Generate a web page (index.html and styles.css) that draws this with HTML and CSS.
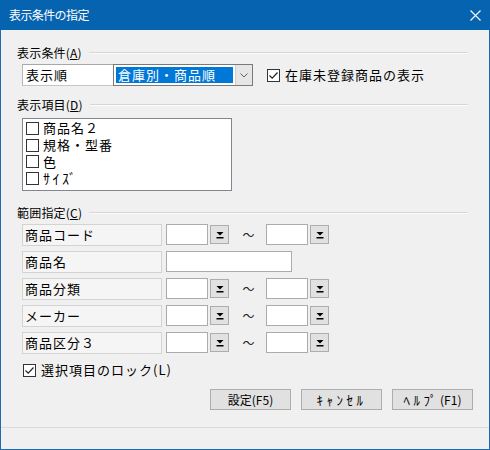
FILE: index.html
```html
<!DOCTYPE html>
<html lang="ja">
<head>
<meta charset="utf-8">
<title>表示条件の指定</title>
<link rel="stylesheet" href="styles.css">
</head>
<body>
<div class="win">
  <div class="titlebar">
    <span class="title">表示条件の指定</span>
    <svg class="close" width="11" height="11" viewBox="0 0 11 11"><path d="M0.5 0.5 L10.5 10.5 M10.5 0.5 L0.5 10.5" stroke="#fff" stroke-width="1.1" fill="none"/></svg>
  </div>
  <div class="body">
    <div class="grp g1"><span>表示条件(<u>A</u>)</span><i class="rule"></i></div>
    <div class="row1">
      <div class="sortlabel">表示順</div>
      <div class="combo">
        <div class="sel">倉庫別・商品順</div>
        <div class="drop"><svg width="8" height="5" viewBox="0 0 8 5"><path d="M0.5 0.5 L4 4 L7.5 0.5" stroke="#606060" fill="none" stroke-width="1"/></svg></div>
      </div>
      <label class="chk top"><span class="box checked"><svg width="11" height="11" viewBox="0 0 11 11"><path d="M1.5 5.5 L4.2 8.2 L9.5 2.5" stroke="#222" stroke-width="1.2" fill="none"/></svg></span><span class="lbl">在庫未登録商品の表示</span></label>
    </div>

    <div class="grp g2"><span>表示項目(<u>D</u>)</span><i class="rule"></i></div>
    <div class="list">
      <div class="item"><span class="box"></span><span class="lbl">商品名２</span></div>
      <div class="item"><span class="box"></span><span class="lbl">規格・型番</span></div>
      <div class="item"><span class="box"></span><span class="lbl">色</span></div>
      <div class="item"><span class="box"></span><span class="lbl hwk">ｻｲｽﾞ</span></div>
    </div>

    <div class="grp g3"><span>範囲指定(<u>C</u>)</span><i class="rule"></i></div>
    <div class="ranges">
      <div class="rrow">
        <div class="rlabel">商品コード</div>
        <div class="inp"></div><div class="dd"><svg width="8" height="8" viewBox="0 0 8 8"><path d="M0.5 1 H7.5 L4 4.5 Z" fill="#000"/><rect x="0.5" y="6" width="7" height="1.5" fill="#000"/></svg></div>
        <div class="tilde">～</div>
        <div class="inp"></div><div class="dd"><svg width="8" height="8" viewBox="0 0 8 8"><path d="M0.5 1 H7.5 L4 4.5 Z" fill="#000"/><rect x="0.5" y="6" width="7" height="1.5" fill="#000"/></svg></div>
      </div>
      <div class="rrow">
        <div class="rlabel">商品名</div>
        <div class="inp wide"></div>
      </div>
      <div class="rrow">
        <div class="rlabel">商品分類</div>
        <div class="inp"></div><div class="dd"><svg width="8" height="8" viewBox="0 0 8 8"><path d="M0.5 1 H7.5 L4 4.5 Z" fill="#000"/><rect x="0.5" y="6" width="7" height="1.5" fill="#000"/></svg></div>
        <div class="tilde">～</div>
        <div class="inp"></div><div class="dd"><svg width="8" height="8" viewBox="0 0 8 8"><path d="M0.5 1 H7.5 L4 4.5 Z" fill="#000"/><rect x="0.5" y="6" width="7" height="1.5" fill="#000"/></svg></div>
      </div>
      <div class="rrow">
        <div class="rlabel">メーカー</div>
        <div class="inp"></div><div class="dd"><svg width="8" height="8" viewBox="0 0 8 8"><path d="M0.5 1 H7.5 L4 4.5 Z" fill="#000"/><rect x="0.5" y="6" width="7" height="1.5" fill="#000"/></svg></div>
        <div class="tilde">～</div>
        <div class="inp"></div><div class="dd"><svg width="8" height="8" viewBox="0 0 8 8"><path d="M0.5 1 H7.5 L4 4.5 Z" fill="#000"/><rect x="0.5" y="6" width="7" height="1.5" fill="#000"/></svg></div>
      </div>
      <div class="rrow">
        <div class="rlabel">商品区分３</div>
        <div class="inp"></div><div class="dd"><svg width="8" height="8" viewBox="0 0 8 8"><path d="M0.5 1 H7.5 L4 4.5 Z" fill="#000"/><rect x="0.5" y="6" width="7" height="1.5" fill="#000"/></svg></div>
        <div class="tilde">～</div>
        <div class="inp"></div><div class="dd"><svg width="8" height="8" viewBox="0 0 8 8"><path d="M0.5 1 H7.5 L4 4.5 Z" fill="#000"/><rect x="0.5" y="6" width="7" height="1.5" fill="#000"/></svg></div>
      </div>
    </div>

    <label class="chk lock"><span class="box checked"><svg width="11" height="11" viewBox="0 0 11 11"><path d="M1.5 5.5 L4.2 8.2 L9.5 2.5" stroke="#222" stroke-width="1.2" fill="none"/></svg></span><span class="lbl">選択項目のロック(L)</span></label>

    <div class="buttons">
      <div class="btn">設定(F5)</div>
      <div class="btn"><span class="hwk b">ｷｬﾝｾﾙ</span></div>
      <div class="btn"><span class="hwk b">ﾍﾙﾌﾟ</span>(F1)</div>
    </div>

    <div class="sep"></div>
  </div>
</div>
</body>
</html>
```

FILE: styles.css
```css
* { box-sizing: border-box; }
html, body { margin: 0; padding: 0; }
body {
  font-family: "Noto Sans CJK JP", "Noto Sans", sans-serif;
  font-size: 13px;
  color: #000;
  background: #f0f0f0;
}
.win {
  width: 490px;
  height: 450px;
  background: #1a6cb4;
  padding: 0 1px 1px 1px;
  display: flex;
  flex-direction: column;
}
.titlebar {
  height: 30px;
  flex: none;
  display: flex;
  align-items: center;
  justify-content: space-between;
  padding: 0 9px 0 9px;
  background: #0563b0;
  margin: 0 -1px;
  color: #fff;
}
.title { font-size: 12px; letter-spacing: -0.6px; line-height: 1; }
.close { display: block; }
.body {
  flex: 1;
  background: #f0f0f0;
  display: flex;
  flex-direction: column;
}
.grp {
  display: flex;
  align-items: center;
  height: 16px;
  padding: 0 21px 0 16px;
  font-size: 12px;
  line-height: 16px;
  letter-spacing: 0.2px;
}
.grp u { text-decoration: underline; text-underline-offset: 1px; }
.grp .rule {
  flex: 1;
  height: 2px;
  border-top: 1px solid #d6d6d6;
  border-bottom: 1px solid #fcfcfc;
  margin-left: 7px;
}
.g1 { margin-top: 15px; }
.g2 { margin-top: 11px; }
.g3 { margin-top: 14px; }

.row1 {
  margin-top: 3px;
  padding-left: 21px;
  display: flex;
  align-items: center;
  height: 22px;
}
.sortlabel {
  width: 91px;
  height: 22px;
  background: #fff;
  border: 1px solid #c6c6c6;
  border-top-color: #a8a8a8;
  border-left-color: #b8b8b8;
  border-right: none;
  padding-left: 3px;
  line-height: 20px;
  letter-spacing: 1px;
}
.combo {
  width: 140px;
  height: 22px;
  border: 1px solid #7a7a7a;
  background: #fff;
  display: flex;
  padding: 2px 0 2px 2px;
}
.sel {
  width: 117px;
  background: #0078d7;
  color: #fff;
  line-height: 16px;
  padding-left: 2px;
  letter-spacing: 1px;
  white-space: nowrap;
}
.drop {
  margin-left: 2px;
  margin-top: -2px;
  margin-bottom: -2px;
  width: 17px;
  background: #e6e6e6;
  border-left: 1px solid #d0d0d0;
  display: flex;
  align-items: center;
  justify-content: center;
}
.chk { display: flex; align-items: center; }
.chk.top { margin-left: 14px; }
.box {
  width: 13px;
  height: 13px;
  border: 1px solid #333;
  background: #fff;
  display: flex;
  align-items: center;
  justify-content: center;
  flex: none;
}
.chk .lbl { margin-left: 5px; letter-spacing: 1px; white-space: nowrap; line-height: 16px; }

.list {
  margin-top: 5px;
  margin-left: 21px;
  width: 210px;
  height: 73px;
  background: #fff;
  border: 1px solid #82878f;
  padding: 1px 0 0 3px;
}
.item {
  height: 16.7px;
  display: flex;
  align-items: center;
}
.item .lbl { margin-left: 4px; letter-spacing: 1px; line-height: 16px; }
.item .hwk { font-size: 14px; letter-spacing: 2.5px; }
.hwk.b { font-size: 13px; letter-spacing: 3.5px; }

.ranges {
  margin-top: 3px;
  padding-left: 21px;
  display: flex;
  flex-direction: column;
  gap: 5px;
}
.rrow {
  display: flex;
  align-items: flex-start;
  height: 22px;
}
.rlabel {
  width: 140px;
  height: 22px;
  background: #f5f5f5;
  border: 1px solid #d3d3d3;
  padding-left: 2px;
  line-height: 20px;
  letter-spacing: 1px;
}
.inp {
  margin-left: 4px;
  width: 42px;
  height: 21px;
  background: #fff;
  border: 1px solid #ababab;
}
.inp.wide { width: 126px; }
.rrow .tilde + .inp { margin-left: 0; }
.dd {
  margin-left: 2px;
  margin-top: 1px;
  width: 19px;
  height: 19px;
  background: #e1e1e1;
  border: 1px solid #adadad;
  display: flex;
  align-items: center;
  justify-content: center;
}
.dd svg { display: block; }
.tilde {
  width: 37px;
  text-align: center;
  font-size: 12px;
  line-height: 21px;
  color: #222;
  padding-left: 2px;
}

.chk.lock { margin-top: 8px; margin-left: 22px; height: 16px; }

.buttons {
  margin-top: 11px;
  padding-right: 16px;
  display: flex;
  justify-content: flex-end;
  gap: 10px;
}
.btn {
  width: 81px;
  height: 21px;
  background: #e1e1e1;
  border: 1px solid #adadad;
  font-size: 12px;
  line-height: 19px;
  text-align: center;
  white-space: nowrap;
}
.sep {
  margin-top: 17px;
  height: 1px;
  background: #dadada;
}
```
